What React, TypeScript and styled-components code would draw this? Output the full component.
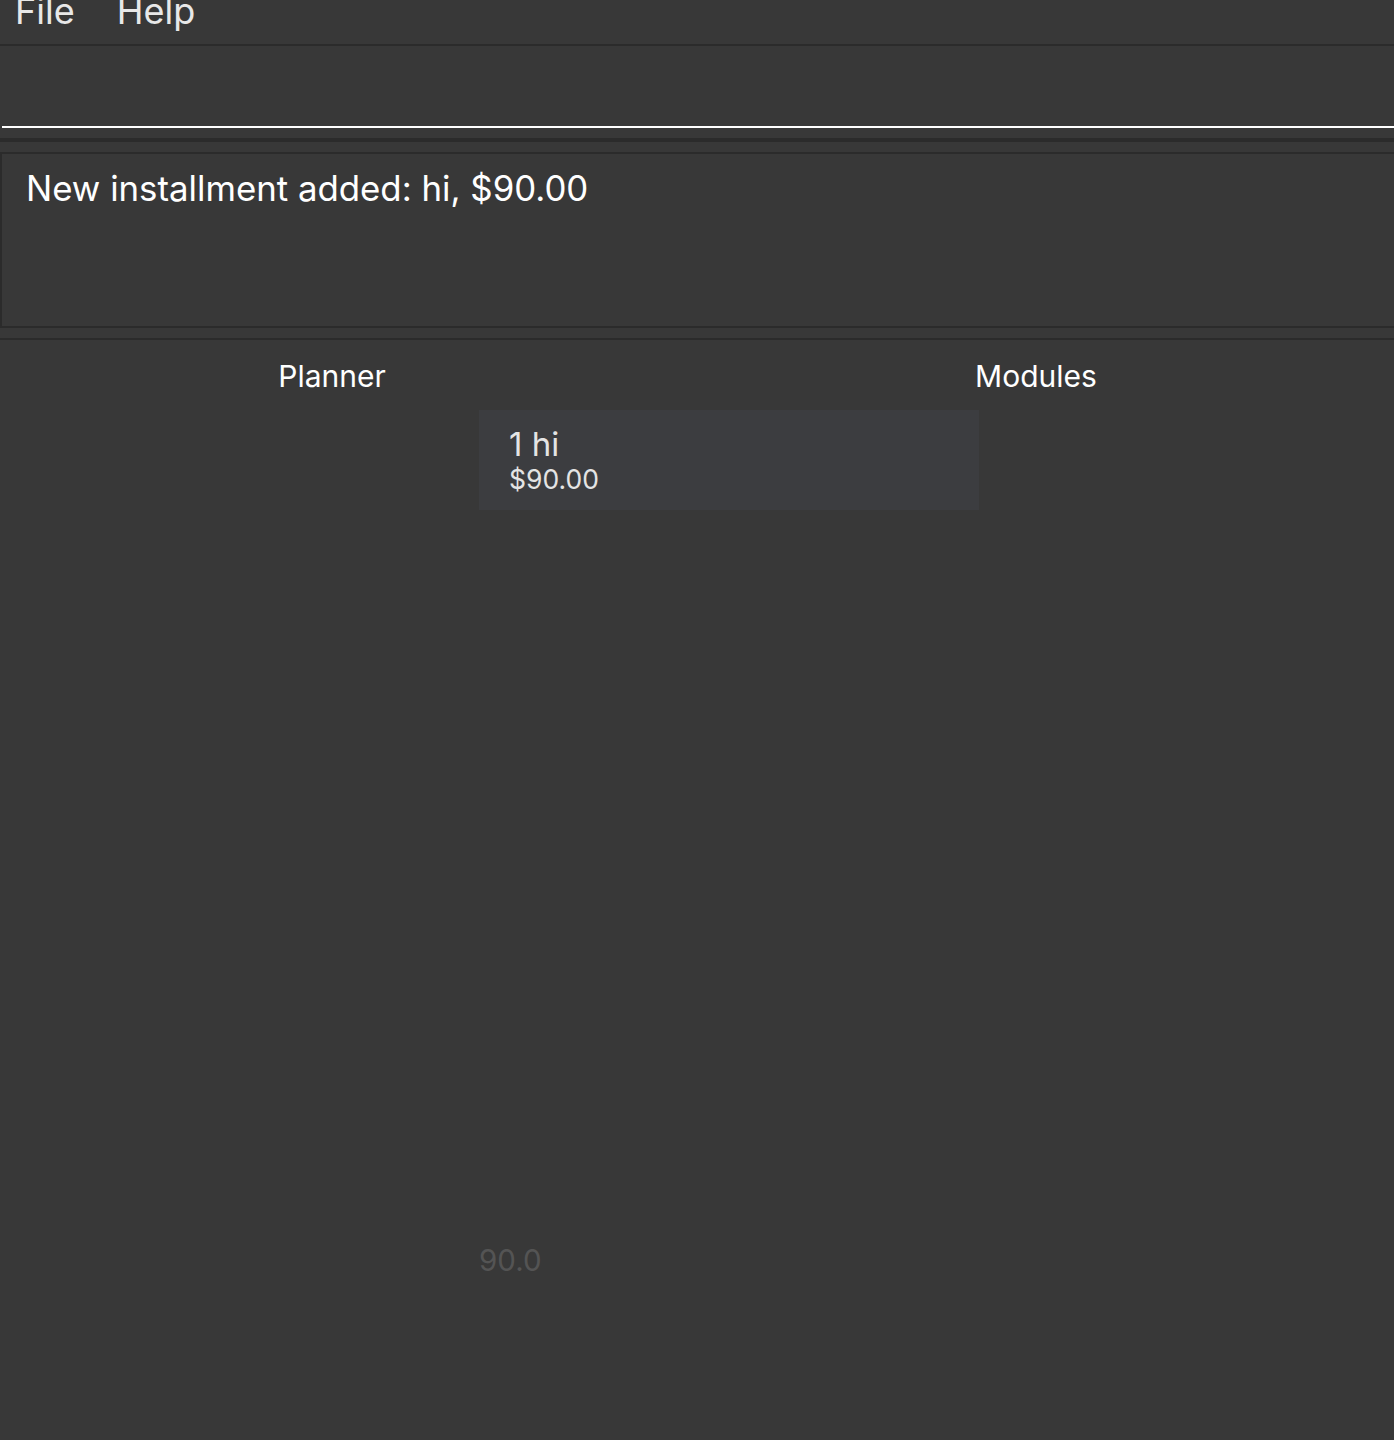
import React from "react";
import styled, { createGlobalStyle } from "styled-components";

const Global = createGlobalStyle`
  html, body {
    margin: 0;
    padding: 0;
    background: #383838;
    height: 100%;
  }
  #root { min-height: 100%; }
  * { box-sizing: border-box; }
`;

const Page = styled.div`
  width: 1394px;
  height: 1440px;
  background: #383838;
  font-family: Inter, "Open Sans", sans-serif;
  color: #ffffff;
  display: flex;
  flex-direction: column;
  overflow: hidden;
`;

const MenuBar = styled.div`
  height: 46px;
  display: flex;
  align-items: flex-end;
  gap: 42px;
  padding: 0 0 0 15px;
  border-bottom: 2px solid #2b2b2b;
  overflow: hidden;
`;

const MenuItem = styled.span`
  font-size: 36px;
  line-height: 36px;
  color: #e8e8e8;
  margin-bottom: 15px;
`;

const CommandArea = styled.div`
  height: 82px;
  padding-left: 2px;
  display: flex;
  align-items: flex-end;
`;

const CommandInput = styled.div`
  width: 100%;
  height: 100%;
  border-bottom: 2px solid #ffffff;
`;

const Band = styled.div<{ $h: number }>`
  height: ${(p) => p.$h}px;
  border-bottom: 4px solid #2b2b2b;
`;

const ResultGap = styled.div`
  height: 10px;
`;

const ResultBox = styled.div`
  height: 176px;
  border: 2px solid #2b2b2b;
  border-right: none;
  padding: 14px 0 0 24px;
  font-size: 34.8px;
  line-height: 40px;
  color: #ffffff;
`;

const AfterResult = styled.div`
  height: 12px;
  border-bottom: 2px solid #2b2b2b;
`;

const Main = styled.div`
  flex: 1;
  display: flex;
  flex-direction: column;
`;

const Headers = styled.div`
  display: grid;
  grid-template-columns: 664px 1fr;
  column-gap: 14px;
  padding-top: 18px;
  height: 70px;
`;

const Header = styled.div`
  text-align: center;
  font-size: 30px;
  line-height: 36px;
  color: #ffffff;
`;

const ListArea = styled.div`
  padding-left: 479px;
  display: flex;
  flex-direction: column;
`;

const Card = styled.div`
  width: 500px;
  height: 100px;
  background: #3c3d40;
  padding: 17px 0 0 30px;
  display: flex;
  flex-direction: column;
`;

const CardTitle = styled.div`
  font-size: 33px;
  line-height: 34px;
  color: #e4e4e4;
`;

const CardAmount = styled.div`
  font-size: 26.5px;
  line-height: 36px;
  color: #e4e4e4;
`;

const AxisLabel = styled.div`
  margin-top: 733px;
  font-size: 29.5px;
  line-height: 34px;
  color: #545454;
`;

export default function App() {
  return (
    <>
      <Global />
      <Page>
        <MenuBar>
          <MenuItem>File</MenuItem>
          <MenuItem>Help</MenuItem>
        </MenuBar>
        <CommandArea>
          <CommandInput />
        </CommandArea>
        <Band $h={14} />
        <ResultGap />
        <ResultBox>New installment added: hi, $90.00</ResultBox>
        <AfterResult />
        <Main>
          <Headers>
            <Header>Planner</Header>
            <Header>Modules</Header>
          </Headers>
          <ListArea>
            <Card>
              <CardTitle>1 hi</CardTitle>
              <CardAmount>$90.00</CardAmount>
            </Card>
            <AxisLabel>90.0</AxisLabel>
          </ListArea>
        </Main>
      </Page>
    </>
  );
}
